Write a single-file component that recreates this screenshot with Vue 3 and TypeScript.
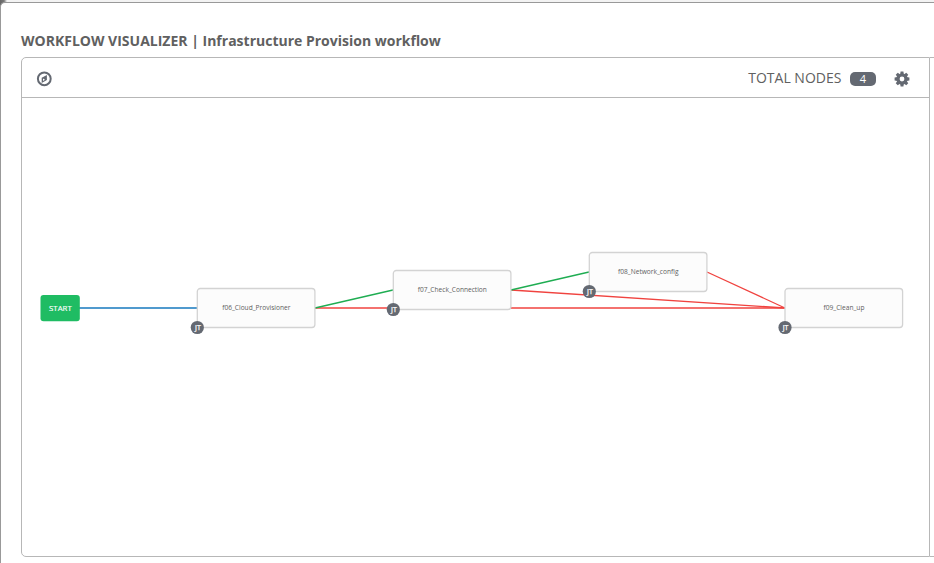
<script setup lang="ts">
interface WorkflowNode { id: number; name: string; x: number; y: number }
interface Link { from: [number, number]; to: [number, number]; kind: 'always' | 'success' | 'failure' }

const title = 'WORKFLOW VISUALIZER | Infrastructure Provision workflow'

const nodes: WorkflowNode[] = [
  { id: 1, name: 'f06_Cloud_Provisioner', x: 175, y: 190.5 },
  { id: 2, name: 'f07_Check_Connection', x: 371, y: 172.5 },
  { id: 3, name: 'f08_Network_config', x: 567, y: 154.5 },
  { id: 4, name: 'f09_Clean_up', x: 762.7, y: 190.5 },
]

const links: Link[] = [
  { from: [57, 210], to: [175, 210], kind: 'always' },
  { from: [293, 210], to: [763, 210], kind: 'failure' },
  { from: [293, 210], to: [371, 192], kind: 'success' },
  { from: [489, 192], to: [763, 210], kind: 'failure' },
  { from: [489, 192], to: [567, 174], kind: 'success' },
  { from: [685, 174], to: [763, 210], kind: 'failure' },
]

const teeth = [0, 45, 90, 135, 180, 225, 270, 315]
</script>

<template>
  <div class="backdrop">
    <main class="modal">
      <h1 class="title">{{ title }}</h1>
      <div class="panels">
        <section class="panel">
          <header class="toolbar">
            <svg class="compass" viewBox="0 0 16 16" aria-label="Key">
              <circle cx="8.3" cy="7.8" r="6.4" fill="none" stroke="#646972" stroke-width="2" />
              <path d="M10.9 3.9v5.2L5.7 11.9V6.7z" fill="#646972" />
              <path d="M7 7.6v2.3L9 8.7z" fill="#fff" />
            </svg>
            <div class="summary">
              <span class="label">TOTAL NODES</span>
              <span class="badge">{{ nodes.length }}</span>
              <svg class="gear" viewBox="-8 -8 16 16" aria-label="Settings">
                <g fill="#646972">
                  <path v-for="a in teeth" :key="a" d="M-1.9-4.5L-1.4-7.4H1.4L1.9-4.5z" :transform="`rotate(${a})`" />
                </g>
                <circle r="4" fill="none" stroke="#646972" stroke-width="3.2" />
              </svg>
            </div>
          </header>
          <svg class="canvas" width="907" height="458" viewBox="0 0 907 458">
            <line
              v-for="(l, i) in links" :key="i" :class="['link', l.kind]"
              :x1="l.from[0]" :y1="l.from[1]" :x2="l.to[0]" :y2="l.to[1]"
            />
            <rect class="start" x="18.5" y="197" width="39.3" height="26.3" rx="3" />
            <text class="start-text" x="38.4" y="213">START</text>
            <g v-for="n in nodes" :key="n.id" :transform="`translate(${n.x} ${n.y})`">
              <rect class="node" x="0.3" y="0" width="117.6" height="39" rx="3" />
              <text class="node-text" x="59.3" y="21.5">{{ n.name }}</text>
              <circle class="type" cx="0.3" cy="39" r="6.6" />
              <text class="type-text" x="0.9" y="41.5">JT</text>
            </g>
          </svg>
        </section>
        <aside class="side-panel"></aside>
      </div>
    </main>
  </div>
</template>

<style>
body { background: #fff; overflow: hidden; }
</style>

<style scoped>
.backdrop {
  box-sizing: border-box;
  height: 563px;
  padding-top: 2px;
  overflow: hidden;
  background: linear-gradient(to right, #666 0, #777 4px, #f3f3f3 7px);
}
.modal {
  box-sizing: border-box;
  height: 570px;
  padding: 28px 0 0 20px;
  border: 1px solid #999;
  border-right: 0;
  border-radius: 5px 0 0 0;
  background: #fff;
}
.title {
  margin: 0;
  height: 26px;
  font: 700 14px/20px "Open Sans", sans-serif;
  color: #606060;
  white-space: nowrap;
}
.panels { display: flex; height: 500px; }
.panel {
  box-sizing: border-box;
  width: 909px;
  height: 500px;
  border: 1px solid #b7b7b7;
  border-radius: 5px 0 0 5px;
}
.side-panel {
  box-sizing: border-box;
  flex: 1;
  border: solid #b7b7b7;
  border-width: 1px 0;
}
.toolbar {
  box-sizing: border-box;
  display: flex;
  align-items: center;
  justify-content: space-between;
  height: 40px;
  padding: 0 19px 0 14px;
  border-bottom: 1px solid #b7b7b7;
}
.compass { width: 16px; height: 16px; margin-top: 3px; }
.summary { display: flex; align-items: center; padding-top: 3px; }
.label { font: 400 14px/20px "Open Sans", sans-serif; color: #606060; margin: -2px 8.6px 0 0; }
.badge {
  width: 26px;
  height: 14px;
  margin-right: 18px;
  border-radius: 5px;
  background: #646972;
  color: #fff;
  font: 400 11px/14px "Open Sans", sans-serif;
  text-align: center;
}
.gear { width: 16px; height: 16px; }
.canvas { display: block; }
.link { stroke-width: 1.3; }
.always { stroke: #1678be; }
.success { stroke: #1fad52; }
.failure { stroke: #f0433f; }
.start { fill: #1fbc63; }
.node { fill: #fcfcfc; stroke: #d3d3d3; stroke-width: 1.3; }
.type { fill: #646972; }
text { font-family: "Open Sans", sans-serif; text-anchor: middle; }
.start-text { font-size: 7.8px; font-weight: 400; fill: #fff; stroke: #fff; stroke-width: 0.15px; }
.node-text { font-size: 6.6px; fill: #606060; }
.type-text { font-size: 7px; fill: #fff; stroke: #fff; stroke-width: 0.25px; }
</style>
